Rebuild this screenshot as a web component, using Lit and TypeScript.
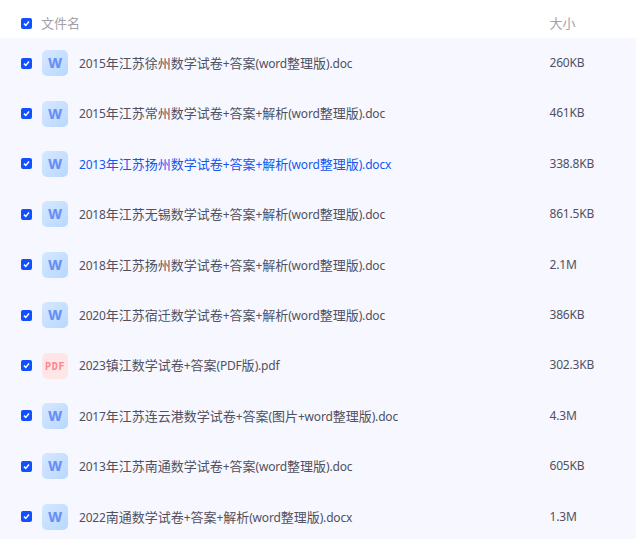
import { LitElement, html, css, svg } from "lit";
import { customElement } from "lit/decorators.js";

const rows: [string, string, string?][] = [
  ["2015年江苏徐州数学试卷+答案(word整理版).doc", "260KB"],
  ["2015年江苏常州数学试卷+答案+解析(word整理版).doc", "461KB"],
  ["2013年江苏扬州数学试卷+答案+解析(word整理版).docx", "338.8KB", "active"],
  ["2018年江苏无锡数学试卷+答案+解析(word整理版).doc", "861.5KB"],
  ["2018年江苏扬州数学试卷+答案+解析(word整理版).doc", "2.1M"],
  ["2020年江苏宿迁数学试卷+答案+解析(word整理版).doc", "386KB"],
  ["2023镇江数学试卷+答案(PDF版).pdf", "302.3KB"],
  ["2017年江苏连云港数学试卷+答案(图片+word整理版).doc", "4.3M"],
  ["2013年江苏南通数学试卷+答案(word整理版).doc", "605KB"],
  ["2022南通数学试卷+答案+解析(word整理版).docx", "1.3M"],
];

const check = html`<span class="check"><svg width="11" height="11" viewBox="0 0 11 11">
  <path d="M3 5.6 L4.8 7.4 L8 3.6" fill="none" stroke="#fff" stroke-width="1.5"/></svg></span>`;

const runs = (s: string) =>
  s.split(/([\u4e00-\u9fff]+)/).map((p, i) => (i % 2 ? p : html`<span class="lat">${p}</span>`));

@customElement("app-root")
export class AppRoot extends LitElement {
  static styles = css`
    :host {
      display: block;
      width: 636px;
      height: 539px;
      overflow: hidden;
      background: #fff;
      font-family: "Noto Sans", "Noto Sans CJK SC", sans-serif;
      font-size: 13px;
      color: #50505f;
    }
    .head, .row {
      display: grid;
      grid-template-columns: 1fr 86.5px;
      align-items: center;
      padding-left: 21px;
    }
    .head { height: 38px; color: #a2a2a9; padding-top: 9px; box-sizing: border-box; }
    .row { height: 50.4px; background: #f7f8ff; box-sizing: border-box; }
    .row.active .name { color: #1456f0; }
    .left { display: flex; align-items: center; min-width: 0; }
    .check {
      width: 11px; height: 11px; border-radius: 2px; background: #1150ff;
      display: block; flex: none; line-height: 0;
    }
    .head .check { margin-right: 9px; }
    .head-label { padding-bottom: 2px; }
    .icon { width: 26px; height: 26px; flex: none; margin: 0 11px 0 10px; display: block; }
    .name, .size { white-space: nowrap; padding-bottom: 1.2px; }
    .lat { font-size: 12px; letter-spacing: -0.18px; }
    .icon text { font-weight: 700; text-anchor: middle; }
    .w { font-family: "Liberation Sans", sans-serif; font-size: 14.5px; fill: #678ef6; stroke: #678ef6; stroke-width: 0.2px; }
    .p { font-family: "DejaVu Sans Mono", monospace; font-size: 10px; fill: #ff858c; letter-spacing: 0.7px; }
  `;

  wordIcon() {
    return svg`<svg class="icon" viewBox="0 0 26 26">
      <defs><linearGradient id="wg" x1="0" y1="0" x2="1" y2="1">
        <stop offset="0" stop-color="#d6e8ff"/><stop offset="1" stop-color="#b8d8ff"/></linearGradient></defs>
      <rect width="26" height="26" rx="5" fill="url(#wg)"/>
      <text class="w" x="13" y="18">W</text>
    </svg>`;
  }

  pdfIcon() {
    return svg`<svg class="icon" viewBox="0 0 26 26">
      <rect width="26" height="26" rx="5" fill="#ffe6e6"/>
      <text class="p" x="13.2" y="17">PDF</text>
    </svg>`;
  }

  render() {
    return html`
      <div class="head">
        <div class="left">${check}<span class="head-label">文件名</span></div>
        <div class="head-label">大小</div>
      </div>
      ${rows.map(([name, size, state]) => html`
        <div class="row ${state ?? ""}">
          <div class="left">
            ${check}
            ${name.endsWith(".pdf") ? this.pdfIcon() : this.wordIcon()}
            <span class="name">${runs(name)}</span>
          </div>
          <div class="size lat">${size}</div>
        </div>`)}
    `;
  }
}
